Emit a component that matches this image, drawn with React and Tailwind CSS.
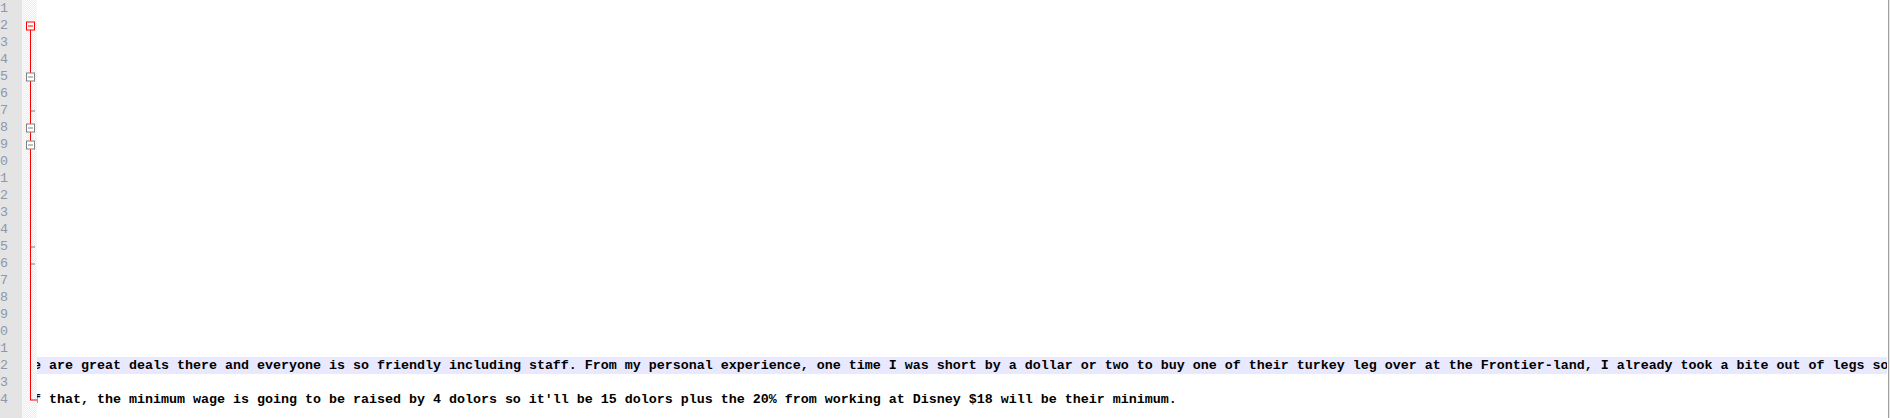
const LINE_COUNT = 24;

const lines = {
  22: {
    text: "There are great deals there and everyone is so friendly including staff. From my personal experience, one time I was short by a dollar or two to buy one of their turkey leg over at the Frontier-land, I already took a bite out of legs so the cashier just let me have it for free.",
    offset: "ml-[-36px]",
  },
  24: {
    text: "Because of that, the minimum wage is going to be raised by 4 dolors so it'll be 15 dolors plus the 20% from working at Disney $18 will be their minimum.",
    offset: "ml-[-76px]",
  },
};

const rows = Array.from({ length: LINE_COUNT }, (_, i) => i + 1);

function FoldBox({ cy, red }) {
  const stroke = red ? "#ff0000" : "#808080";
  return (
    <g>
      <rect x="4.5" y={cy - 4} width="8" height="8" fill="#ffffff" stroke={stroke} />
      <line x1="6" y1={cy} x2="11" y2={cy} stroke={stroke} />
    </g>
  );
}

function FoldTree() {
  const mid = (n) => (n - 1) * 17 + 8.5;
  return (
    <svg width="15" height="418" className="absolute left-0 top-0">
      <line x1="8.5" y1={mid(2) + 4} x2="8.5" y2={mid(24) + 0.5} stroke="#ff0000" />
      <line x1="8" y1={mid(24) + 0.5} x2="15" y2={mid(24) + 0.5} stroke="#ff0000" />
      {[7, 15, 16].map((n) => (
        <line key={n} x1="9" y1={mid(n) + 0.5} x2="13" y2={mid(n) + 0.5} stroke="#808080" />
      ))}
      <FoldBox cy={mid(2) + 0.5} red />
      <FoldBox cy={mid(5) + 0.5} />
      <FoldBox cy={mid(8) + 0.5} />
      <FoldBox cy={mid(9) + 0.5} />
    </svg>
  );
}

export default function App() {
  return (
    <div className="flex h-[418px] w-[1890px] overflow-hidden bg-white font-['Liberation_Mono',monospace] text-[13.33px] leading-[17px]">
      {/* line numbers */}
      <div className="w-[22px] shrink-0 overflow-hidden bg-[#e4e4e4] text-[#8c98ac]">
        {rows.map((n) => (
          <div key={n} className="ml-[-24px] h-[17px] w-[32px] text-right">
            {n}
          </div>
        ))}
      </div>

      {/* fold margin */}
      <div className="relative w-[15px] shrink-0 bg-[repeating-conic-gradient(#ececec_0_25%,#ffffff_0_50%)] bg-[length:2px_2px]">
        <FoldTree />
      </div>

      {/* text */}
      <div className="flex-1 overflow-hidden font-bold text-black">
        {rows.map((n) => {
          const line = lines[n];
          return (
            <div
              key={n}
              className={`h-[17px] whitespace-pre ${n === 22 ? "bg-[#e8e8ff]" : ""}`}
            >
              {line ? <div className={line.offset}>{line.text}</div> : null}
            </div>
          );
        })}
      </div>

      {/* window edge */}
      <div className="w-px shrink-0 bg-white" />
      <div className="w-px shrink-0 bg-[#a0a0a0]" />
      <div className="w-px shrink-0 bg-[#e6e6e6]" />
    </div>
  );
}
